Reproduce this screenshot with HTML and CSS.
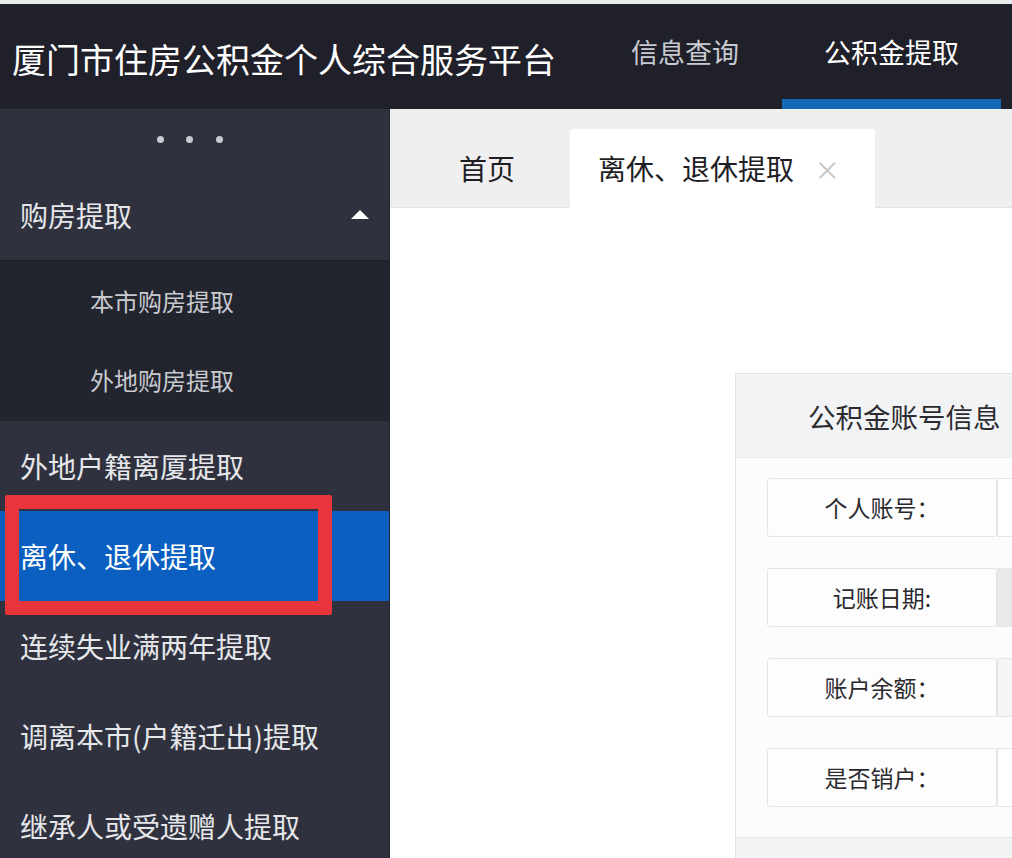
FILE: index.html
```html
<!DOCTYPE html>
<html lang="zh-CN">
  <head>
    <meta charset="UTF-8" />
    <meta name="viewport" content="width=device-width, initial-scale=1.0" />
    <title>厦门市住房公积金个人综合服务平台</title>
    <link rel="stylesheet" href="styles.css">
  </head>
  <body>
    <div class="topline"></div>
    <header class="header">
      <div class="brand">厦门市住房公积金个人综合服务平台</div>
      <nav class="nav">
        <a class="nav-item">信息查询</a>
        <a class="nav-item active">公积金提取</a>
      </nav>
    </header>

    <div class="main">
      <aside class="sidebar">
        <div class="dots"><span></span><span></span><span></span></div>

        <div class="menu-group open">
          <div class="menu-title">
            购房提取
            <span class="caret"></span>
          </div>
          <div class="submenu">
            <div class="sub-item">本市购房提取</div>
            <div class="sub-item">外地购房提取</div>
          </div>
        </div>

        <div class="menu-item">外地户籍离厦提取</div>
        <div class="menu-item active">离休、退休提取</div>
        <div class="menu-item">连续失业满两年提取</div>
        <div class="menu-item">调离本市(户籍迁出)提取</div>
        <div class="menu-item">继承人或受遗赠人提取</div>
      </aside>

      <section class="content">
        <div class="tabs">
          <div class="tab">首页</div>
          <div class="tab active">离休、退休提取 <span class="tab-close">×</span></div>
        </div>

        <div class="page">
          <div class="panel">
            <div class="panel-head">公积金账号信息</div>
            <div class="panel-body">
              <div class="form-row">
                <div class="label">个人账号：</div>
                <div class="field"></div>
              </div>
              <div class="form-row">
                <div class="label">记账日期:</div>
                <div class="field disabled"></div>
              </div>
              <div class="form-row">
                <div class="label">账户余额：</div>
                <div class="field light"></div>
              </div>
              <div class="form-row">
                <div class="label">是否销户：</div>
                <div class="field"></div>
              </div>
            </div>
            <div class="panel-foot"></div>
          </div>
        </div>
      </section>
    </div>

    <!-- annotation box from the screenshot -->
    <div class="mark"></div>
  </body>
</html>
```

FILE: styles.css
```css
* {
  box-sizing: border-box;
}

body {
  margin: 0;
  width: 1012px;
  height: 858px;
  overflow: hidden;
  position: relative;
  font-family: "Noto Sans CJK SC", "Noto Sans", sans-serif;
  background: #ffffff;
}

.topline {
  height: 4px;
  background: #e9ecef;
}

.header {
  display: flex;
  justify-content: space-between;
  height: 105px;
  background: #1f2029;
  color: #ffffff;
}

.brand {
  padding: 30px 0 0 12px;
  font-size: 34px;
  line-height: 50px;
  white-space: nowrap;
}

.nav {
  display: flex;
  gap: 2px;
  padding-right: 11px;
}

.nav-item {
  display: block;
  width: 190px;
  padding-top: 28px;
  text-align: center;
  font-size: 27px;
  line-height: 40px;
  color: #c9cbd2;
  border-bottom: 10px solid transparent;
}

.nav-item.active {
  width: 219px;
  color: #ffffff;
  border-bottom-color: #1568b3;
}

.main {
  display: flex;
  height: 749px;
}

.sidebar {
  width: 390px;
  flex-shrink: 0;
  background: #2f323e;
  color: #e6e7ea;
  border-right: 1px solid #23252e;
}

.dots {
  display: flex;
  justify-content: center;
  gap: 22.5px;
  height: 61px;
  padding: 27px 10px 0 0;
}

.dots span {
  width: 7px;
  height: 7px;
  border-radius: 50%;
  background: #c9cad2;
}

.menu-title,
.menu-item {
  height: 90px;
  padding-left: 20px;
  font-size: 28px;
  line-height: 90px;
  white-space: nowrap;
}

.menu-title {
  position: relative;
}

.caret {
  position: absolute;
  right: 20px;
  top: 40px;
  width: 0;
  height: 0;
  border-left: 9px solid transparent;
  border-right: 9px solid transparent;
  border-bottom: 9px solid #ffffff;
}

.submenu {
  background: #22242e;
  border-top: 1px solid #1b1c24;
  padding-bottom: 2px;
}

.sub-item {
  height: 79px;
  padding-left: 90px;
  font-size: 24px;
  line-height: 79px;
  color: #c8cad0;
}

.menu-item.active {
  background: #0b5fc0;
  color: #ffffff;
}

.content {
  flex: 1;
  overflow: hidden;
  background: #ffffff;
}

.tabs {
  display: flex;
  height: 99px;
  padding: 20px 0 0 2px;
  background: #efeff0;
  border-bottom: 1px solid #e2e2e4;
}

.tab {
  height: 79px;
  width: 176px;
  padding-left: 14px;
  text-align: center;
  font-size: 28px;
  line-height: 78px;
  color: #1e1e24;
}

.tab.active {
  width: 305px;
  margin-left: 2px;
  padding-left: 28px;
  text-align: left;
  background: #ffffff;
  border-radius: 3px 3px 0 0;
  white-space: nowrap;
}

.tab-close {
  margin-left: 14px;
  font-size: 26px;
  color: #c4c4c8;
}

.page {
  padding: 165px 0 0 345px;
}

.panel {
  width: 620px;
  border: 1px solid #e1e2e4;
  background: #fcfcfd;
}

.panel-head {
  height: 84px;
  padding-left: 72px;
  font-size: 27.5px;
  line-height: 84px;
  color: #2c2c30;
  background: #f2f3f4;
  border-bottom: 1px solid #eaebec;
}

.panel-body {
  display: flex;
  flex-direction: column;
  gap: 31px;
  padding: 20px 0 30px 31px;
}

.form-row {
  display: flex;
  height: 59px;
}

.label {
  width: 230px;
  text-align: center;
  font-size: 23px;
  line-height: 57px;
  color: #2a2a2e;
  background: #fdfdfd;
  border: 1px solid #e4e5e7;
  border-radius: 3px;
}

.field {
  width: 300px;
  border: 1px solid #e4e5e7;
  background: #ffffff;
}

.field.disabled {
  background: #e9e9eb;
}

.field.light {
  background: #f5f5f6;
}

.panel-foot {
  height: 30px;
  background: #f2f3f4;
  border-top: 1px solid #e4e5e7;
}

.mark {
  position: absolute;
  left: 5px;
  top: 495px;
  width: 327px;
  height: 120px;
  border: 14px solid #e8353b;
  border-radius: 2px;
}
```
